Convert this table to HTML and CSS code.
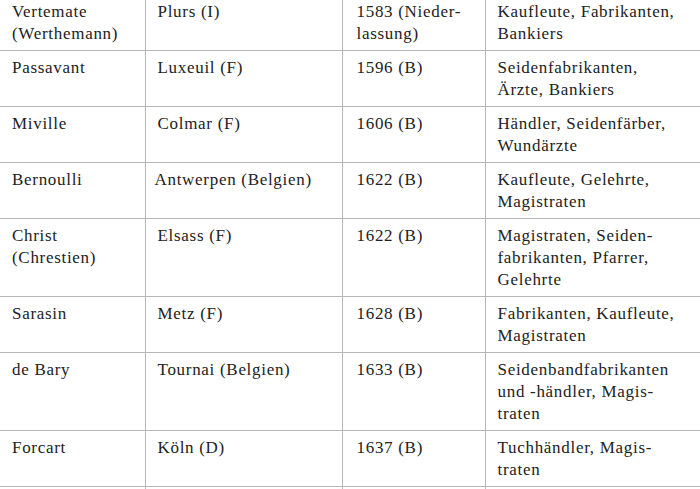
FILE: index.html
```html
<!DOCTYPE html>
<html lang="de">
<head>
<meta charset="utf-8">
<title>Refugiantenfamilien</title>
<link rel="stylesheet" href="styles.css">
</head>
<body>
<table class="families">
  <colgroup>
    <col class="c-name">
    <col class="c-origin">
    <col class="c-year">
    <col class="c-work">
  </colgroup>
  <tbody>
    <tr>
      <td>Vertemate<br>(Werthemann)</td>
      <td>Plurs (I)</td>
      <td class="year">1583 (Nieder-<br>lassung)</td>
      <td>Kaufleute, Fabrikanten,<br>Bankiers</td>
    </tr>
    <tr>
      <td>Passavant</td>
      <td>Luxeuil (F)</td>
      <td class="year">1596 (B)</td>
      <td>Seidenfabrikanten,<br>Ärzte, Bankiers</td>
    </tr>
    <tr>
      <td>Miville</td>
      <td>Colmar (F)</td>
      <td class="year">1606 (B)</td>
      <td>Händler, Seidenfärber,<br>Wundärzte</td>
    </tr>
    <tr>
      <td>Bernoulli</td>
      <td class="tight">Antwerpen (Belgien)</td>
      <td class="year">1622 (B)</td>
      <td>Kaufleute, Gelehrte,<br>Magistraten</td>
    </tr>
    <tr>
      <td>Christ<br>(Chrestien)</td>
      <td>Elsass (F)</td>
      <td class="year">1622 (B)</td>
      <td>Magistraten, Seiden-<br>fabrikanten, Pfarrer,<br>Gelehrte</td>
    </tr>
    <tr>
      <td>Sarasin</td>
      <td>Metz (F)</td>
      <td class="year">1628 (B)</td>
      <td>Fabrikanten, Kaufleute,<br>Magistraten</td>
    </tr>
    <tr>
      <td>de Bary</td>
      <td>Tournai (Belgien)</td>
      <td class="year">1633 (B)</td>
      <td>Seidenbandfabrikanten<br>und -händler, Magis-<br>traten</td>
    </tr>
    <tr>
      <td>Forcart</td>
      <td>Köln (D)</td>
      <td class="year">1637 (B)</td>
      <td>Tuchhändler, Magis-<br>traten</td>
    </tr>
    <tr>
      <td>&nbsp;</td>
      <td>&nbsp;</td>
      <td class="year">&nbsp;</td>
      <td>&nbsp;</td>
    </tr>
  </tbody>
</table>
</body>
</html>
```
FILE: styles.css
```css
html, body {
  margin: 0;
  padding: 0;
  background: #ffffff;
  overflow: hidden;
}

.families {
  margin-top: -6px;
  border-collapse: collapse;
  table-layout: fixed;
  width: 760px;
  font-family: "Liberation Serif", "Times New Roman", serif;
  font-size: 17px;
  letter-spacing: 0.7px;
  line-height: 22px;
  color: #222222;
}

.c-name { width: 145px; }
.c-origin { width: 197px; }
.c-year { width: 143px; }
.c-work { width: 275px; }

.families td {
  vertical-align: top;
  white-space: nowrap;
  padding: 6px 8px 5px 12px;
  border: 1px solid #b6b6b6;
}

.families td:first-child {
  border-left: none;
}

.families td.tight {
  padding-left: 9px;
}

.families td.year {
  padding-left: 14px;
}
```
